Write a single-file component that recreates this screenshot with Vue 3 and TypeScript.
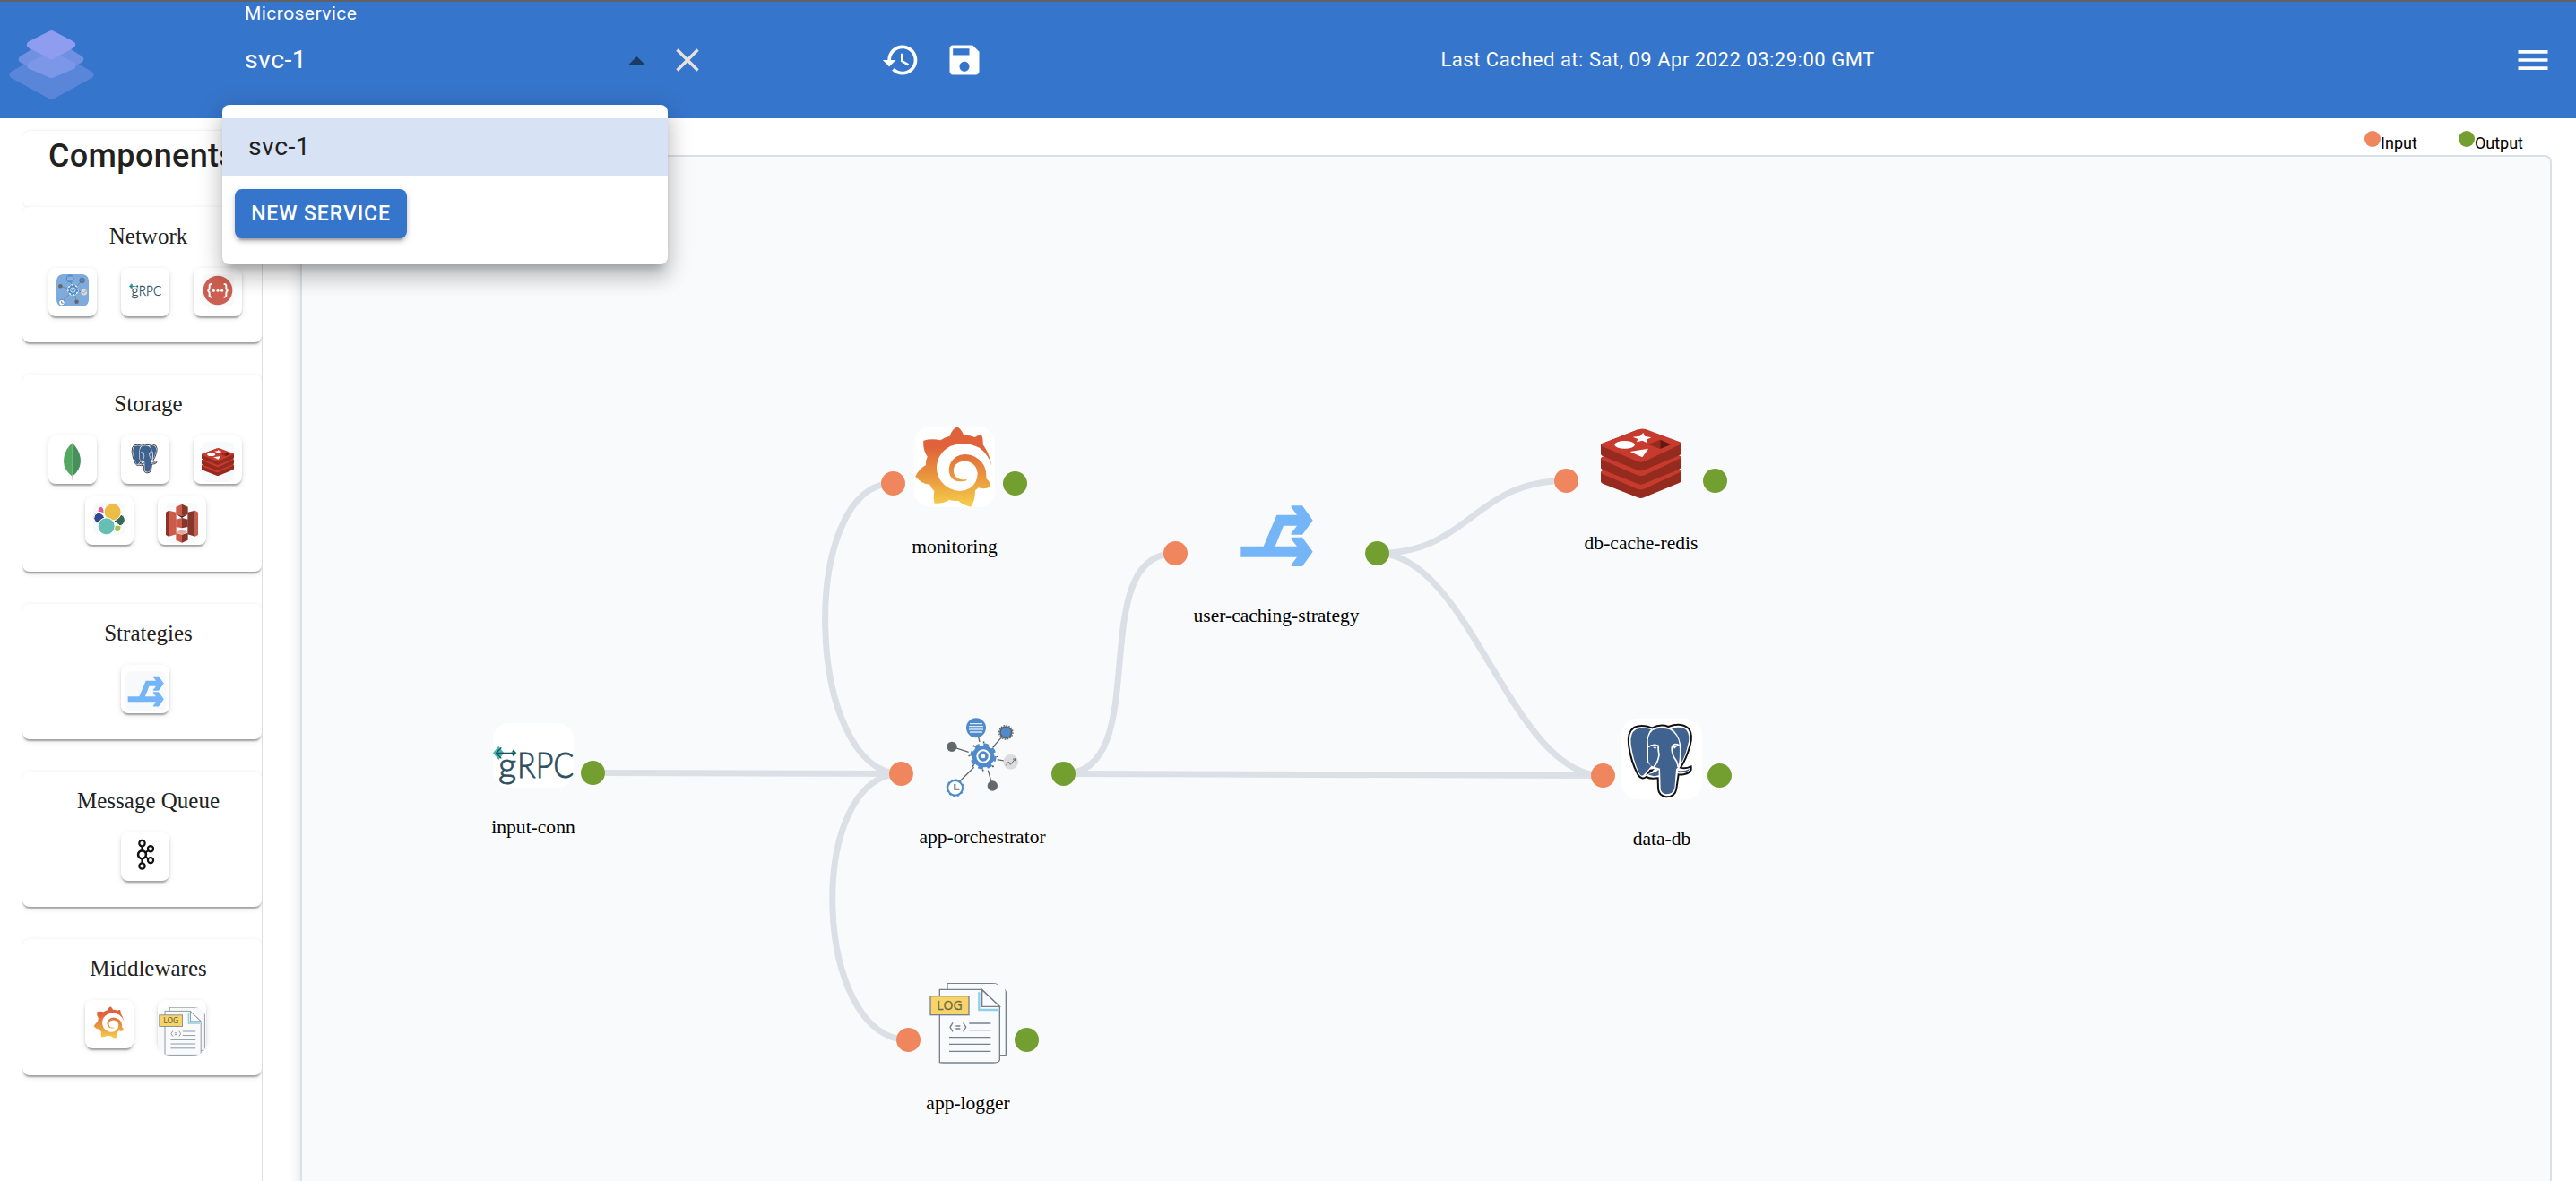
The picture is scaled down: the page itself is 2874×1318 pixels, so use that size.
<script setup lang="ts">
interface PaletteItem {
  icon: string
  w: number
  h: number
  tint?: boolean
}
interface PaletteGroup {
  title: string
  items: PaletteItem[]
}
interface FlowNode {
  label: string
  icon: string
  x: number
  y: number
  h: number
  white?: boolean
  input?: [number, number]
  output: [number, number]
}

const groups: PaletteGroup[] = [
  {
    title: 'Network',
    items: [
      { icon: 'rest', w: 36, h: 36 },
      { icon: 'grpc', w: 36, h: 29 },
      { icon: 'swagger', w: 36, h: 36, tint: true },
    ],
  },
  {
    title: 'Storage',
    items: [
      { icon: 'mongo', w: 36, h: 45 },
      { icon: 'postgres', w: 36, h: 36 },
      { icon: 'redis', w: 36, h: 45, tint: true },
      { icon: 'elastic', w: 36, h: 36, tint: true },
      { icon: 's3', w: 36, h: 45, tint: true },
    ],
  },
  { title: 'Strategies', items: [{ icon: 'strategy', w: 45, h: 45, tint: true }] },
  { title: 'Message Queue', items: [{ icon: 'kafka', w: 36, h: 36 }] },
  {
    title: 'Middlewares',
    items: [
      { icon: 'grafana', w: 36, h: 36 },
      { icon: 'log', w: 54, h: 54, tint: true },
    ],
  },
]

const nodes: FlowNode[] = [
  { label: 'input-conn', icon: 'grpc', x: 550, y: 807, h: 72, white: true, output: [661.5, 862.5] },
  { label: 'monitoring', icon: 'grafana', x: 1020, y: 476, h: 90, white: true, input: [996.5, 539.5], output: [1132.5, 539.5] },
  { label: 'app-orchestrator', icon: 'orchestrator', x: 1051, y: 799.5, h: 90, input: [1005.5, 863.5], output: [1186.5, 863.5] },
  { label: 'app-logger', icon: 'log', x: 1035, y: 1097, h: 90, input: [1013.5, 1160.5], output: [1145.5, 1160.5] },
  { label: 'user-caching-strategy', icon: 'strategy', x: 1379, y: 552.5, h: 90, input: [1311.5, 617.5], output: [1536.5, 617.5] },
  { label: 'db-cache-redis', icon: 'redis', x: 1786, y: 472, h: 90, input: [1747.5, 536.5], output: [1913.5, 536.5] },
  { label: 'data-db', icon: 'postgres', x: 1809, y: 801.5, h: 90, white: true, input: [1788.5, 865.5], output: [1918.5, 865.5] },
]

const edges: string[] = [
  'M661.5 862.5 C770 862.5 897 863.5 1005.5 863.5',
  'M1005.5 863.5 C898 863.5 890 539.5 996.5 539.5',
  'M1005.5 863.5 C898 863.5 906 1160.5 1013.5 1160.5',
  'M1186.5 863.5 C1290 863.5 1208 617.5 1311.5 617.5',
  'M1186.5 863.5 L1788.5 865.5',
  'M1536.5 617.5 C1640 617.5 1644 536.5 1747.5 536.5',
  'M1536.5 617.5 C1640 617.5 1685 865.5 1788.5 865.5',
]
</script>

<template>
  <svg class="defs" width="0" height="0" aria-hidden="true">
    <defs>
      <linearGradient id="grafana-fill" x1="0" y1="0" x2="0" y2="1">
        <stop offset="0.25" stop-color="#e0623a" />
        <stop offset="0.6" stop-color="#e8933e" />
        <stop offset="1" stop-color="#f6cf49" />
      </linearGradient>

      <symbol id="i-grafana" viewBox="180 78 270 270">
        <path
          fill="url(#grafana-fill)"
          d="M439 209 Q433 170 410 138 Q411 120 406 108 Q394 106 383 114 Q364 106 346 107 Q336 85 323 79 Q306 88 299 110 Q282 114 268 124 Q240 117 211 125 Q208 155 224 179 Q218 192 219 207 Q195 220 184 245 Q203 270 232 272 Q238 285 247 294 Q243 320 248 335 Q272 338 297 324 Q312 328 328 327 Q346 343 369 347 Q384 328 384 292 Q391 288 395 283 Q420 290 435 278 Q437 266 421 252 Q424 212 398 190 Q378 171 350 171 Q322 172 305 194 Q290 216 300 242 Q314 270 356 259 L355 255 Q330 260 317 244 Q305 220 318 206 Q335 190 362 196 Q388 204 392 234 Q392 268 365 285 Q335 302 300 286 Q256 262 255 215 Q258 165 302 143 Q350 124 398 149 Q428 170 439 209Z"
        />
      </symbol>

      <symbol id="i-grpc" viewBox="90 81 270 216">
        <path fill="#43b8b0" d="M90 181 L109 158 L127 181 L109 204Z M150 181 L159 168 L169 181 L159 194Z" />
        <path d="M118 163 L101 181 L118 199 M101 181 H165 M156 173 L165 181 L156 189" fill="none" stroke="#244c5a" stroke-width="4" />
        <g class="logo-text" fill="#2d4f5f" stroke="#2d4f5f" stroke-width="2.6">
          <text x="108" y="263" font-size="116" textLength="60" lengthAdjust="spacingAndGlyphs">g</text>
          <text x="171" y="263" font-size="120" textLength="190" lengthAdjust="spacingAndGlyphs">RPC</text>
        </g>
      </symbol>

      <symbol id="i-postgres" viewBox="147 63 270 270">
        <path
          d="M190 92 Q215 81 250 94 Q278 80 304 90 Q345 74 372 96 Q387 118 377 152 Q365 195 345 227 Q360 232 380 223 Q384 243 358 249 Q343 252 338 250 L331 298 Q326 326 296 325 Q272 320 270 298 L269 262 Q245 266 230 258 Q215 270 202 250 Q178 205 171 150 Q166 108 190 92Z"
          fill="#fff"
          stroke="#111"
          stroke-width="6"
        />
        <path
          d="M196 99 Q218 90 246 99 Q230 118 233 150 V208 Q241 218 247 222 L224 248 Q214 262 205 243 Q186 200 179 150 Q174 112 196 99Z M252 102 Q280 90 309 100 Q337 116 341 150 Q344 196 337 226 L330 232 L325 295 Q320 316 297 316 Q279 314 278 296 L276 230 Q262 226 248 221 Q237 214 237 200 V150 Q232 119 252 102Z M315 96 Q348 86 365 102 Q379 120 369 152 Q361 188 346 214 Q350 180 345 148 Q338 114 315 96Z M232 247 Q252 250 272 234 V253 Q250 260 232 247Z M336 236 Q354 242 375 231 Q372 244 338 244Z"
          fill="#40628f"
        />
        <path d="M237 158 Q253 146 270 154 Q270 170 273 184 Q270 208 256 224 M341 152 Q320 144 316 158 Q314 178 325 196 Q335 208 337 226" fill="none" stroke="#fff" stroke-width="5" />
        <path d="M228 252 L242 233 L258 231 L247 242Z" fill="#111" />
        <path d="M252 158 h12 l-3 8z M320 156 h13 l-9 8z" fill="#fff" />
      </symbol>

      <symbol id="i-redis" viewBox="198 66 270 270">
        <g v-for="dy in [92, 46, 0]" :key="dy" :transform="`translate(0 ${dy})`">
          <path d="M198 138 L322 88 L468 136 V168 Q466 172 460 175 L342 224 Q332 228 322 224 L204 177 Q198 174 198 170Z" fill="#952a1e" />
          <path d="M202 134 L326 88 Q336 83 348 87 L463 130 Q471 134 463 139 L346 194 Q333 200 320 195 L202 144 Q195 139 202 134Z" fill="#c63b2d" />
        </g>
        <ellipse cx="278" cy="139" rx="34" ry="13" fill="#fff" />
        <path d="M340 99 L345 110 L367 115 L350 122 L353 133 L337 125 L318 130 L322 120 L305 113 L329 110Z M296 162 L357 152 L337 181Z" fill="#fff" />
        <path d="M357 138 L397 122 V153Z" fill="#952a1e" />
        <path d="M397 122 L433 138 L397 153Z" fill="#621a10" />
      </symbol>

      <symbol id="i-strategy" viewBox="266 68 270 270">
        <path d="M282 238 H358 L402 133 H470 L451 107 V102 H488 L523 151 L488 199 H451 V194 L470 169 H425 L397 238 H470 L451 214 V208 H488 L523 256 L488 305 H451 V300 L470 274 H282Z" fill="#74b5f8" />
      </symbol>

      <symbol id="i-orchestrator" viewBox="213 59 270 270">
        <path d="M246 159 L302 177 M327 96 L339 143 M427 111 L387 156 M443 210 L398 202 M382 290 L367 238 M270 277 L320 228" stroke="#63686a" stroke-width="4" />
        <circle cx="351" cy="191" r="47" fill="#fff" />
        <circle cx="351" cy="191" r="37" fill="#4f8aca" />
        <circle cx="351" cy="191" r="39" fill="none" stroke="#4f8aca" stroke-width="10" stroke-dasharray="17 13.6" />
        <circle cx="351" cy="191" r="20" fill="#4f8aca" stroke="#fff" stroke-width="6" />
        <circle cx="351" cy="191" r="7" fill="#fff" />
        <circle cx="351" cy="191" r="47" fill="none" stroke="#4d5356" stroke-width="5" stroke-dasharray="5 31.9" stroke-dashoffset="2" />
        <circle cx="327" cy="96" r="33" fill="#4f8aca" />
        <path d="M306 82 H348 M303 91 H351 M303 101 H351 M306 110 H348" stroke="#dbe8f6" stroke-width="4" />
        <circle cx="427" cy="111" r="19" fill="#4f8aca" stroke="#5c6366" stroke-width="5" />
        <circle cx="427" cy="111" r="23" fill="none" stroke="#5c6366" stroke-width="4" stroke-dasharray="5 4" />
        <circle cx="246" cy="159" r="17" fill="#63686a" />
        <circle cx="382" cy="290" r="17" fill="#63686a" />
        <circle cx="443" cy="210" r="25" fill="#dcdcdc" />
        <path d="M427 222 L436 209 L442 219 L457 201 M450 201 L458 199 L458 207" fill="none" stroke="#63686a" stroke-width="3" />
        <circle cx="257" cy="297" r="25" fill="#fff" stroke="#4f8aca" stroke-width="6" />
        <circle cx="257" cy="297" r="28" fill="none" stroke="#4f8aca" stroke-width="4" stroke-dasharray="7 7.6" />
        <path d="M256 284 V301 H271" fill="none" stroke="#63686a" stroke-width="6" />
      </symbol>

      <symbol id="i-rest" viewBox="189 258 108 108">
        <rect x="189" y="258" width="108" height="108" rx="18" fill="#7fabdc" />
        <use href="#i-orchestrator" x="189" y="258" width="108" height="108" />
      </symbol>

      <symbol id="i-log" viewBox="165 81 270 270">
        <path d="M231 103 V82 H392 L402 86 M424 100 Q427 104 427 110 V323 H407" fill="none" stroke="#75818a" stroke-width="4" />
        <path d="M205 103 H347 L406 160 V338 Q404 348 394 348 H205Z" fill="#f8fafc" stroke="#75818a" stroke-width="4" />
        <path d="M337 112 V171 H400" fill="none" stroke="#8fd0e2" stroke-width="7" />
        <path d="M347 104 V160 H406Z" fill="#fafbfd" stroke="#75818a" stroke-width="4" />
        <path d="M304 216 H376 M304 239 H376 M237 263 H376 M237 286 H376 M237 310 H376" stroke="#75818a" stroke-width="4" />
        <path d="M249 214 L240 229 L249 244 M284 214 L293 229 L284 244 M259 225 H274 M259 234 H274" fill="none" stroke="#75818a" stroke-width="4" />
        <rect x="174" y="125" width="129" height="63" fill="#f8d468" stroke="#75818a" stroke-width="4" />
        <text class="log-text" x="196" y="171" font-size="42" textLength="85" lengthAdjust="spacingAndGlyphs" fill="#6f6a4c" stroke="#6f6a4c" stroke-width="1">LOG</text>
      </symbol>

      <symbol id="i-swagger" viewBox="0 0 108 108">
        <circle cx="54" cy="54" r="49" fill="#cd5f52" />
        <path d="M34 33 Q25 32 26 41 Q27 55 19 55 Q27 55 26 69 Q25 78 34 77 M74 33 Q83 32 82 41 Q81 55 89 55 Q81 55 82 69 Q83 78 74 77" fill="none" stroke="#fff" stroke-width="6" />
        <circle v-for="cx in [40, 54, 68]" :key="cx" :cx="cx" cy="55" r="4.5" fill="#fff" />
      </symbol>

      <symbol id="i-mongo" viewBox="0 0 108 135">
        <path d="M53 4 Q24 30 24 66 Q25 96 53 116Z" fill="#53a860" />
        <path d="M53 4 Q81 32 81 66 Q79 97 53 116Z" fill="#46905a" />
        <path d="M51 112 H56 L57 130 H53Z" fill="#c2c8c4" />
      </symbol>

      <symbol id="i-elastic" viewBox="0 0 108 108">
        <g stroke="#fff" stroke-width="3">
          <path d="M37 36 Q36 14 26 13 Q14 16 15 31 Q26 30 36 37Z" fill="#d95a94" />
          <path d="M16 33 Q1 40 2 53 Q4 66 18 69 L38 50 Q31 35 16 33Z" fill="#314a8f" />
          <path d="M92 39 Q107 46 106 60 Q103 75 90 78 L69 61 Q78 47 92 39Z" fill="#366759" />
          <path d="M70 76 Q84 74 94 79 Q92 97 80 98 Q69 97 70 76Z" fill="#a2c44f" />
          <circle cx="65" cy="31" r="28.5" fill="#ebbd45" />
          <circle cx="44" cy="79" r="28.5" fill="#67beb5" />
        </g>
      </symbol>

      <symbol id="i-s3" viewBox="555 1023 108 135">
        <path d="M555 1055 L565 1049 V1136 L555 1131Z" fill="#8c3325" />
        <path d="M565 1049 L590 1055 V1129 L565 1136Z" fill="#cc5c49" />
        <path d="M663 1055 L653 1049 V1136 L663 1131Z" fill="#cc5c49" />
        <path d="M653 1049 L628 1055 V1129 L653 1136Z" fill="#84372a" />
        <path d="M589 1037 L609 1028 V1068 L589 1061Z M589 1079 L609 1074 V1108 L589 1104Z M589 1124 L609 1130 V1157 L589 1148Z" fill="#cc5c49" />
        <path d="M629 1037 L609 1028 V1068 L629 1061Z M629 1079 L609 1074 V1108 L629 1104Z M629 1124 L609 1130 V1157 L629 1148Z" fill="#84372a" />
        <path d="M589 1061 L609 1068 L629 1061 L609 1074Z" fill="#4f1c14" />
        <path d="M589 1121 L609 1114 L629 1121 L609 1130Z" fill="#e8a69a" />
      </symbol>

      <symbol id="i-kafka" viewBox="0 0 36 36">
        <g fill="none" stroke="#111" stroke-width="2.2">
          <circle cx="14.5" cy="5.1" r="3.2" />
          <circle cx="14.5" cy="17.8" r="4.4" stroke-width="2.6" />
          <circle cx="14.5" cy="30.5" r="3.2" />
          <circle cx="24" cy="11.3" r="3.1" />
          <circle cx="24" cy="24.1" r="3.1" />
          <path d="M14.5 8.5 V13.3 M14.5 22.3 V27.1 M18.3 15.3 L21.5 13.2 M18.3 20.2 L21.5 22.4" />
        </g>
      </symbol>
    </defs>
  </svg>

  <div class="app">
    <header class="bar">
      <svg class="logo" viewBox="0 0 95 76">
        <g stroke-width="8" stroke-linejoin="round">
          <path d="M47.5 24 L89.5 48.5 L47.5 71.5 L5.5 48.5Z" fill="#5a86da" stroke="#5a86da" />
          <path d="M47.5 12 L78.5 31.5 L47.5 48 L15.5 31.5Z" fill="#7090e2" stroke="#7090e2" />
          <path d="M47.5 27 L70 38.5 L47.5 48 L25 38.5Z" fill="#7c96e8" stroke="#7c96e8" />
          <path d="M47.5 4 L69.5 15.5 L47.5 27.5 L24.5 15.5Z" fill="#8e9df0" stroke="#8e9df0" />
        </g>
      </svg>
      <div class="select">
        <span class="select-label">Microservice</span>
        <span class="select-value">svc-1</span>
      </div>
      <svg class="caret" viewBox="0 0 20 10"><path d="M0 10 L10 0 L20 10Z" fill="#1c3b64" /></svg>
      <svg class="clear" viewBox="0 0 26 26"><path d="M1.5 1.5 L24.5 24.5 M24.5 1.5 L1.5 24.5" stroke="#e5e2de" stroke-width="3.4" /></svg>
      <svg class="act history" viewBox="0 0 24 24">
        <path d="M13 3c-4.97 0-9 4.03-9 9H1l3.89 3.89.07.14L9 12H6c0-3.87 3.13-7 7-7s7 3.13 7 7-3.13 7-7 7c-1.93 0-3.68-.79-4.94-2.06l-1.42 1.42C8.27 19.99 10.51 21 13 21c4.97 0 9-4.03 9-9s-4.03-9-9-9zm-1 5v5l4.28 2.54.72-1.21-3.5-2.08V8H12z" />
      </svg>
      <svg class="act" viewBox="0 0 24 24">
        <path d="M17 3H5c-1.11 0-2 .9-2 2v14c0 1.1.89 2 2 2h14c1.1 0 2-.9 2-2V7l-4-4zm-5 16c-1.66 0-3-1.34-3-3s1.34-3 3-3 3 1.34 3 3-1.34 3-3 3zm3-10H5V5h10v4z" />
      </svg>
      <span class="cached">Last Cached at: Sat, 09 Apr 2022 03:29:00 GMT</span>
      <svg class="act menu-icon" viewBox="0 0 24 24"><path d="M3 18h18v-2H3v2zm0-5h18v-2H3v2zm0-7v2h18V6H3z" /></svg>
    </header>

    <div class="body">
      <aside class="sidebar">
        <div class="card heading"><h2>Components</h2></div>
        <section v-for="g in groups" :key="g.title" class="card">
          <h3>{{ g.title }}</h3>
          <div class="tiles">
            <div v-for="it in g.items" :key="it.icon" class="tile" :class="{ snug: it.icon === 'log' }">
              <svg :class="{ tint: it.tint }" :width="it.w" :height="it.h"><use :href="`#i-${it.icon}`" width="100%" height="100%" /></svg>
            </div>
          </div>
        </section>
      </aside>

      <main class="main">
        <div class="legend">
          <span class="key"><i class="dot in"></i>Input</span>
          <span class="key"><i class="dot out"></i>Output</span>
        </div>
        <div class="canvas"></div>
      </main>
    </div>

    <svg class="edges" width="2874" height="1318">
      <path v-for="d in edges" :key="d" :d="d" />
    </svg>
    <template v-for="n in nodes" :key="n.label">
      <div class="node" :style="{ left: n.x + 'px', top: n.y + 'px' }">
        <svg width="90" :height="n.h" :class="{ white: n.white }"><use :href="`#i-${n.icon}`" width="100%" height="100%" /></svg>
        <span>{{ n.label }}</span>
      </div>
      <i v-if="n.input" class="port in" :style="{ left: n.input[0] + 'px', top: n.input[1] + 'px' }"></i>
      <i class="port out" :style="{ left: n.output[0] + 'px', top: n.output[1] + 'px' }"></i>
    </template>

    <div class="dropdown">
      <div class="option">svc-1</div>
      <button class="new">NEW SERVICE</button>
    </div>
  </div>
</template>

<style>
body {
  overflow: hidden;
}
</style>

<style scoped>
.defs {
  position: absolute;
}
.app {
  position: relative;
  width: 2874px;
  height: 1318px;
  overflow: hidden;
  background: #fff;
  display: flex;
  flex-direction: column;
}
.bar {
  flex: none;
  box-sizing: border-box;
  height: 132px;
  border-top: 2px solid #606164;
  background: #3575cb;
  display: flex;
  align-items: center;
  color: #fff;
  font-family: Roboto, sans-serif;
}
.logo {
  width: 97px;
  height: 77.6px;
  margin-left: 9px;
  margin-top: 11px;
}
.select {
  align-self: flex-start;
  display: flex;
  flex-direction: column;
  width: 428px;
  margin-left: 167px;
}
.select-label {
  font-size: 21px;
  line-height: 26px;
  letter-spacing: 0.45px;
}
.select-value {
  font-size: 28.5px;
  line-height: 32px;
  margin-top: 23px;
  letter-spacing: 0.4px;
}
.caret {
  width: 19px;
  height: 9px;
}
.clear {
  width: 26px;
  height: 26px;
  margin-left: 33.5px;
}
.act {
  width: 44px;
  height: 44px;
  fill: #fff;
  margin-left: 27.5px;
}
.act.history {
  margin-left: 203px;
}
.cached {
  margin-left: 509.5px;
  font-size: 22px;
  letter-spacing: 0.51px;
  width: 490px;
  white-space: nowrap;
}
.act.menu-icon {
  margin-left: auto;
  margin-right: 26.5px;
}
.bar > svg.act,
.clear,
.cached {
  margin-bottom: 1px;
}
.body {
  flex: 1;
  display: flex;
  min-height: 0;
}
.sidebar {
  flex: none;
  box-sizing: border-box;
  width: 268px;
  margin-left: 25px;
  padding-top: 14px;
  overflow: hidden;
  border-right: 1px solid #dedede;
  display: flex;
  flex-direction: column;
  gap: 35.9px;
}
.card {
  flex: none;
  background: #fff;
  border-radius: 8px;
  padding-bottom: 29.4px;
  box-shadow: 0 4px 2px -2px rgba(0, 0, 0, 0.2), 0 2px 2px 0 rgba(0, 0, 0, 0.14), 0 2px 6px 0 rgba(0, 0, 0, 0.12);
}
.card.heading {
  height: 85px;
  margin-bottom: -35.9px;
  padding: 0;
  box-shadow: 0 0 3px rgba(0, 0, 0, 0.12);
}
.heading h2 {
  margin: 0;
  padding: 7px 0 0 29px;
  font: 500 36px/43px Roboto, sans-serif;
  letter-spacing: 0.34px;
  color: #212121;
}
.card h3 {
  margin: 0;
  padding: 19px 0 21px 14px;
  text-align: center;
  font: 400 25px/28px 'Liberation Serif', serif;
  color: #212121;
}
.tiles {
  display: flex;
  flex-wrap: wrap;
  justify-content: center;
  gap: 14px 27.3px;
  padding-left: 7.4px;
}
.tile {
  width: 54px;
  height: 54px;
  box-sizing: border-box;
  padding-top: 7px;
  border-radius: 8px;
  background: #fff;
  display: flex;
  justify-content: center;
  align-items: flex-start;
  box-shadow: 0 4px 2px -2px rgba(0, 0, 0, 0.2), 0 2px 2px 0 rgba(0, 0, 0, 0.14), 0 2px 6px 0 rgba(0, 0, 0, 0.12);
}
.tile svg {
  flex: none;
  border-radius: 7px;
}
.tile .tint {
  background: #f8f9fb;
}
.tile.snug .tint {
  margin-top: 1px;
  border-radius: 14px;
}
.main {
  flex: 1;
  display: flex;
  flex-direction: column;
  padding: 0 27px 0 0;
  position: relative;
}
.legend {
  height: 41px;
  box-sizing: border-box;
  padding: 14px 32px 0 0;
  display: flex;
  justify-content: flex-end;
  gap: 46px;
  font: 400 18px/28px Roboto, sans-serif;
  color: #000;
}
.key {
  display: flex;
}
.dot {
  width: 18px;
  height: 18px;
  border-radius: 50%;
}
.in {
  background: #f0865d;
}
.out {
  background: #739e30;
}
.canvas {
  flex: 1;
  margin-left: 42px;
  border: 2px solid #dbe0e7;
  border-bottom: none;
  border-radius: 8px 8px 0 0;
  background: #f9fafc;
  box-shadow: -4px 20px 16px -4px rgba(0, 0, 0, 0.13);
  clip-path: inset(0 0 0 -40px);
}
.edges {
  position: absolute;
  left: 0;
  top: 0;
}
.edges path {
  fill: none;
  stroke: #dbe0e7;
  stroke-width: 7;
}
.node {
  position: absolute;
  width: 90px;
  display: flex;
  flex-direction: column;
  align-items: center;
}
.node svg {
  flex: none;
  border-radius: 18px;
}
.node .white {
  background: #fff;
}
.node span {
  margin-top: 32px;
  font: 400 21.55px/24px 'Liberation Serif', serif;
  color: #000;
  white-space: nowrap;
}
.port {
  position: absolute;
  width: 27px;
  height: 27px;
  margin: -13.5px 0 0 -13.5px;
  border-radius: 50%;
}
.logo-text {
  font-family: Lato, sans-serif;
  font-weight: 300;
}
.log-text {
  font-family: 'Open Sans', sans-serif;
}
.dropdown {
  position: absolute;
  left: 248px;
  top: 117px;
  width: 497px;
  height: 178px;
  box-sizing: border-box;
  padding-top: 15px;
  border-radius: 8px;
  background: #fff;
  font-family: Roboto, sans-serif;
  box-shadow: 0 10px 10px -6px rgba(0, 0, 0, 0.2), 0 16px 20px 2px rgba(0, 0, 0, 0.14), 0 6px 28px 4px rgba(0, 0, 0, 0.12);
}
.option {
  height: 64px;
  padding-left: 29px;
  background: #d7e2f4;
  color: #212121;
  font-size: 28.5px;
  line-height: 64px;
  letter-spacing: 0.4px;
}
.new {
  display: block;
  margin: 15px 0 0 14px;
  width: 192px;
  height: 55px;
  padding: 0;
  border: 0;
  border-radius: 8px;
  background: #3575cb;
  color: #fff;
  font: 500 23px/54px Roboto, sans-serif;
  letter-spacing: 0.9px;
  box-shadow: 0 6px 2px -4px rgba(0, 0, 0, 0.2), 0 4px 4px 0 rgba(0, 0, 0, 0.14), 0 2px 8px 0 rgba(0, 0, 0, 0.12);
}
</style>
